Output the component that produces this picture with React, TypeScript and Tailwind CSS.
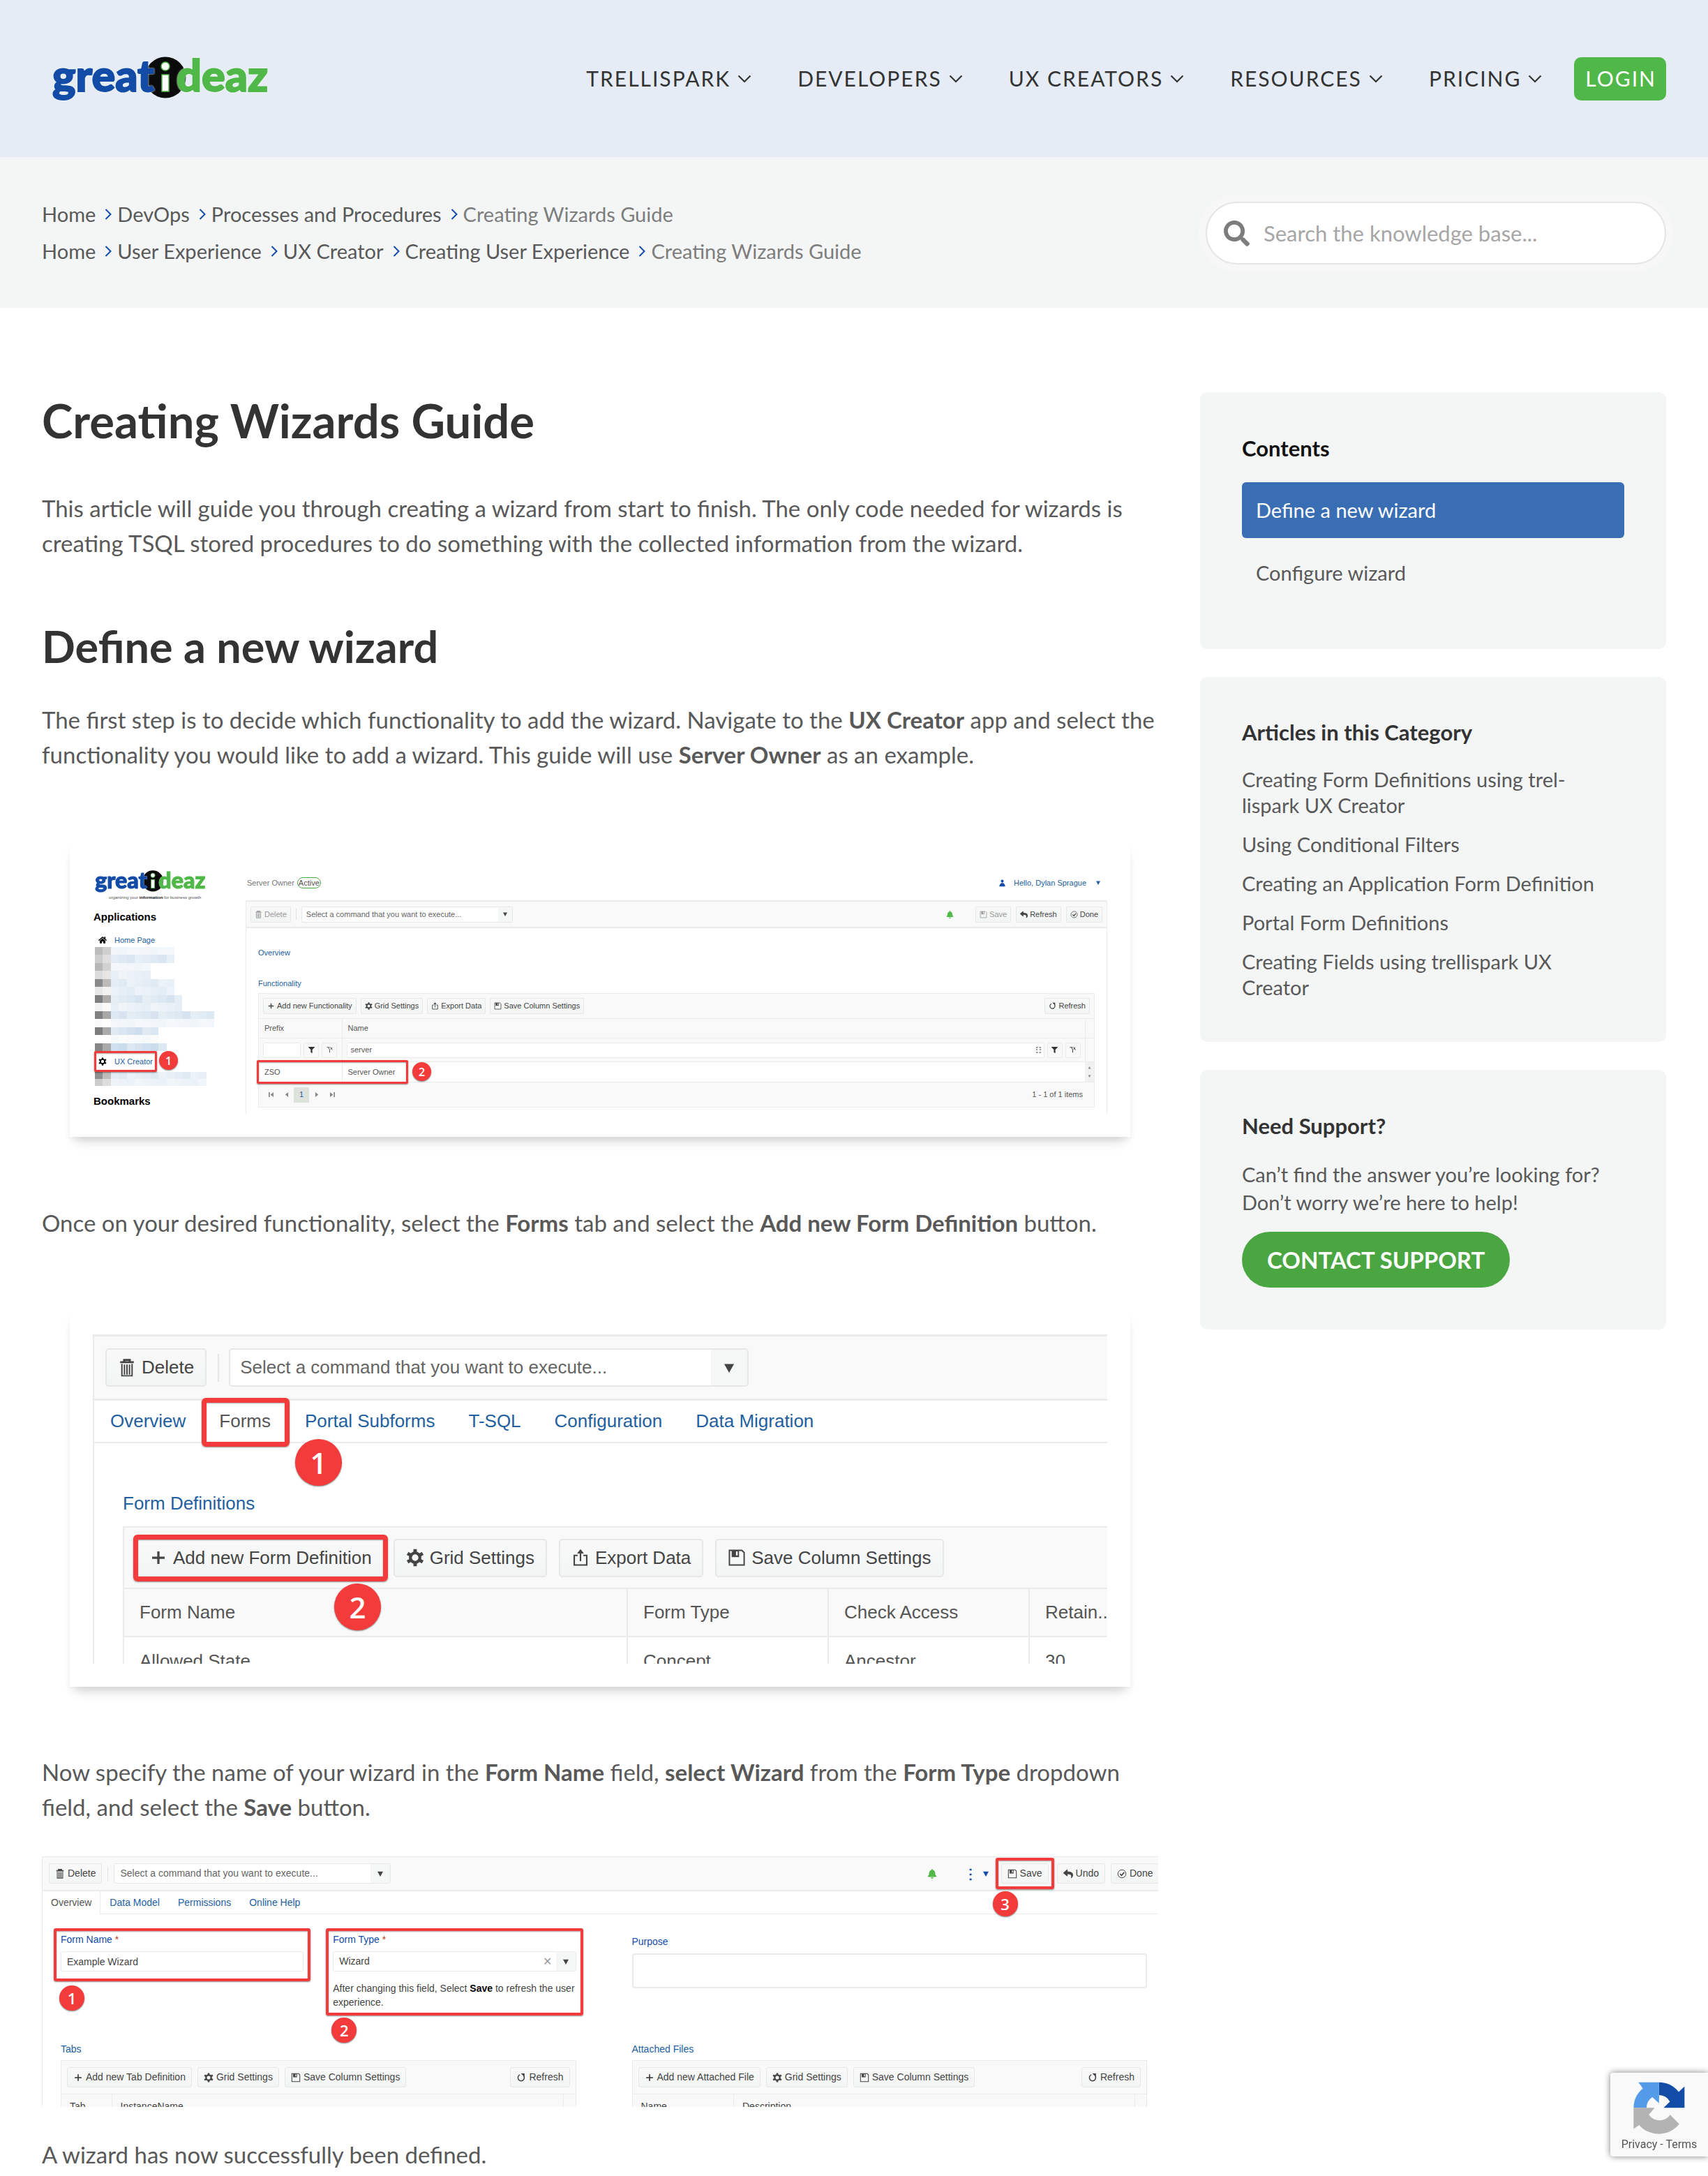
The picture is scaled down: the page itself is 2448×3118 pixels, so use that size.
import React from "react";
import { FaBell, FaFilter, FaHome, FaReply, FaSearch } from "react-icons/fa";

/* ---------- icons ---------- */

const Svg = ({ children, className = "h-[1em] w-[1em]" }: { children: React.ReactNode; className?: string }) => (
  <svg viewBox="0 0 16 16" className={`shrink-0 ${className}`} fill="none" stroke="currentColor" strokeWidth="1" aria-hidden="true">
    {children}
  </svg>
);

const Trash = () => (
  <Svg>
    <path d="M2 3h12M5.500 3V1h5v2" strokeWidth="1.800" />
    <path d="M3.500 4.500V15h9V4.500M5.800 5v9M8 5v9M10.200 5v9" strokeWidth="1.200" />
  </Svg>
);
const Plus = () => (
  <Svg>
    <path d="M8 2.500v11M2.500 8h11" strokeWidth="2" />
  </Svg>
);
const Gear = () => (
  <Svg>
    <circle cx="8" cy="8" r="4.200" strokeWidth="2.600" />
    <path d="M8 .5v3M8 12.500v3M1.300 4.200l2.600 1.500M12.100 10.300l2.600 1.500M1.300 11.800l2.600-1.500M12.100 5.700l2.600-1.500" strokeWidth="3" />
  </Svg>
);
const Export = () => (
  <Svg>
    <path d="M5.500 6H2.500v8.500h11V6h-3M8 11V2.500" strokeWidth="1.300" />
    <path d="M8 .5l3 3.800H5z" fill="currentColor" stroke="none" />
  </Svg>
);
const Floppy = () => (
  <Svg>
    <path d="M1.500 1.500h11l2 2v11h-13z" strokeWidth="1.200" />
    <path d="M3.500 1.500h6.500v6H3.500z" fill="currentColor" stroke="none" />
    <path d="M7.300 2.500h1.500v3.500H7.300z" fill="#fff" stroke="none" />
  </Svg>
);
const Reload = () => (
  <Svg>
    <path d="M6 3.300A5.200 5.200 0 1 0 12 5" strokeWidth="1.800" />
    <path d="M7.500 1h6v6z" fill="currentColor" stroke="none" />
  </Svg>
);
const Check = () => (
  <Svg>
    <circle cx="8" cy="8" r="6.600" strokeWidth="1.100" />
    <path d="M4.800 8l2.600 2.600 4.300-5" strokeWidth="1.900" />
  </Svg>
);
const Person = () => (
  <Svg>
    <circle cx="8" cy="3.800" r="3" fill="currentColor" stroke="none" />
    <path d="M6 7.500h4c2.500 1.500 4 4 4 7.500H2c0-3.500 1.500-6 4-7.500z" fill="currentColor" stroke="none" />
  </Svg>
);
const FilterOff = () => (
  <Svg>
    <path d="M2 2.500h5l-1 2 2 3v6M10 7l3-4.500M9 2l5 6" strokeWidth="1.400" />
  </Svg>
);
const Caret = ({ className = "h-[8px] w-[8px]" }: { className?: string }) => (
  <svg viewBox="0 0 10 10" className={`shrink-0 ${className}`} fill="currentColor" aria-hidden="true">
    <path d="M0 1h10L5 10z" />
  </svg>
);
const Chevron = ({ className }: { className: string }) => (
  <svg viewBox="0 0 20 12" className={className} fill="none" stroke="currentColor" strokeWidth="2.200" aria-hidden="true">
    <path d="M1.500 1.500L10 10l8.500-8.500" />
  </svg>
);
const Pager = ({ d }: { d: string }) => (
  <svg viewBox="0 0 8 8" className="h-[7px] w-[7px]" fill="#888" aria-hidden="true">
    <path d={d} />
  </svg>
);

const Logo = ({ className, tagline = false }: { className: string; tagline?: boolean }) => (
  <svg viewBox={tagline ? "0 0 310 84" : "0 0 310 72"} className={`overflow-visible ${className}`} role="img" aria-label="greatideaz">
    <circle cx="161" cy="34" r="29.500" fill="#0b0b0b" />
    <g
      fontFamily="Lato, sans-serif"
      fontWeight="900"
      fontSize="63"
      strokeWidth="2"
      className="drop-shadow-[0_0_1px_#ffffff]"
    >
      <text x="-1" y="54" fill="#124ca6" stroke="#124ca6">great</text>
      <text x="177" y="54" fill="#50b848" stroke="#50b848">deaz</text>
    </g>
    <circle cx="161" cy="18" r="6" fill="#fff" stroke="#50b848" strokeWidth="1.500" />
    <path d="M156 30h10v24h-10z" fill="#fff" stroke="#50b848" strokeWidth="1.500" />
    {tagline && (
      <text x="38" y="84" fontFamily="Liberation Sans, sans-serif" fontSize="12" fill="#555">
        organizing your <tspan fontWeight="700" fill="#111">information</tspan> for business growth
      </text>
    )}
  </svg>
);

/* ---------- application screenshot parts ---------- */

type Size = "sm" | "md" | "lg";
const buttonSize: Record<Size, string> = {
  sm: "h-[23px] gap-[3px] rounded-[2px] border px-[5px] text-[11px]",
  md: "h-[29px] gap-1 rounded-[3px] border px-2 text-[14px]",
  lg: "h-[55px] gap-2 rounded-[5px] border-2 px-4 text-[26px]",
};
const Btn = ({ size, icon, children, muted = false }: { size: Size; icon: React.ReactNode; children: React.ReactNode; muted?: boolean }) => (
  <button
    type="button"
    className={`flex shrink-0 items-center whitespace-nowrap border-[#e6e7e8] bg-linear-to-b from-[#f9f9f9] to-[#f3f5f5] ${muted ? "text-[#999]" : "text-[#444]"} ${buttonSize[size]}`}
  >
    {icon}
    {children}
  </button>
);

const comboSize: Record<Size, string> = {
  sm: "h-[23px] w-[303px] rounded-[2px] border text-[11px]",
  md: "h-[29px] w-[397px] rounded-[3px] border text-[14px]",
  lg: "h-[55px] w-[745px] rounded-[5px] border-2 text-[26px]",
};
const comboPad: Record<Size, string> = { sm: "px-[6px]", md: "px-2", lg: "px-[14px]" };
const comboArrow: Record<Size, string> = { sm: "w-[20px]", md: "w-[28px]", lg: "w-[52px]" };
const caretSize: Record<Size, string> = { sm: "h-[6px] w-[6px]", md: "h-[8px] w-[8px]", lg: "h-[14px] w-[14px]" };
const Combo = ({ size }: { size: Size }) => (
  <div className={`flex shrink-0 overflow-hidden border-[#e6e7e8] bg-white text-[#656565] ${comboSize[size]}`}>
    <select aria-label="Command" className={`min-w-0 flex-1 appearance-none bg-transparent ${comboPad[size]}`}>
      <option>Select a command that you want to execute...</option>
    </select>
    <span className={`flex items-center justify-center bg-[#f5f6f6] text-[#444] ${comboArrow[size]}`}>
      <Caret className={caretSize[size]} />
    </span>
  </div>
);

const badgeSize: Record<Size, string> = {
  sm: "h-[27px] w-[27px] text-[16px]",
  md: "h-[36px] w-[36px] text-[22px]",
  lg: "h-[67px] w-[67px] text-[42px]",
};
const Badge = ({ size, n, className }: { size: Size; n: number; className: string }) => (
  <span className={`absolute z-10 flex items-center justify-center rounded-full bg-[#f43b3b] font-["Open_Sans",sans-serif] leading-none font-semibold text-white shadow-[0_1px_2px_rgba(0,0,0,0.5)] ${badgeSize[size]} ${className}`}>
    {n}
  </span>
);
const Mark = ({ className }: { className: string }) => (
  <span className={`pointer-events-none absolute border-[#f43b3b] shadow-[0_1px_2px_rgba(0,0,0,0.45),inset_0_1px_2px_rgba(0,0,0,0.35)] ${className}`} />
);

const mosaic: [string, string, number, number][] = [
  ["#bcbcbc", "#cfcfcf", 10, 0.25],
  ["#cccccc", "#dedede", 10, 0.6],
  ["#b8b8b8", "#d2d2d2", 7, 0.25],
  ["#dcdcdc", "#e6e6e6", 7, 0.4],
  ["#8a8a8a", "#bbbbbb", 10, 0.5],
  ["#e8e8e8", "#f2f2f2", 10, 0.45],
  ["#7e7e7e", "#adadad", 11, 0.65],
  ["#f2f2f2", "#fafafa", 11, 0.4],
  ["#808080", "#a8a8a8", 15, 0.65],
  ["#fafafa", "#fdfdfd", 15, 0.25],
  ["#7d7d7d", "#aaaaaa", 8, 0.8],
  ["#ffffff", "#ffffff", 8, 0.15],
  ["#868686", "#aaaaaa", 9, 0.85],
];
const mosaicEnd: [string, string, number, number][] = [
  ["#8e8e8e", "#bdbdbd", 14, 0.5],
  ["#cccccc", "#dddddd", 14, 0.35],
];
const Mosaic = ({ rows, className }: { rows: [string, string, number, number][]; className: string }) => (
  <svg viewBox={`0 0 15 ${rows.length}`} preserveAspectRatio="none" className={className} shapeRendering="crispEdges" aria-hidden="true">
    {rows.map(([a, b, n, o], r) =>
      Array.from({ length: n }, (_, c) => (
        <rect
          key={`${r}-${c}`}
          x={c}
          y={r}
          width="1"
          height="1"
          fill={c === 0 ? a : c === 1 ? b : "#c2d6e8"}
          opacity={c < 2 ? 1 : o * (0.65 + 0.35 * (((c * 5 + r * 3) % 4) / 3))}
        />
      )),
    )}
  </svg>
);

const sans = 'font-["Liberation_Sans",Arial,sans-serif] leading-normal';
const line = "border-[#ebebeb]";

const ServerOwnerShot = () => (
  <div className={`flex h-[356px] overflow-hidden text-[11px] text-[#555] ${sans}`}>
    <div className="flex w-[219px] shrink-0 flex-col pt-[5px] text-[#22609f]">
      <Logo tagline className="ml-[3px] h-[43px] w-[160px]" />
      <h3 className="mt-[17px] ml-px text-[15px] leading-[18px] font-bold text-black">Applications</h3>
      <a href="#home" className="mt-[14px] flex h-[20px] items-center gap-[11px] pl-2">
        <FaHome className="text-[12px] text-black" />
        Home Page
      </a>
      <Mosaic rows={mosaic} className="ml-[3px] h-[149px] w-[171px]" />
      <div className="relative">
        <a href="#ux" className="flex h-[30px] items-center gap-[11px] pl-2">
          <span className="text-[12px] text-black"><Gear /></span>
          UX Creator
        </a>
        <Mark className="inset-y-0 left-[2px] w-[90px] rounded-[2px] border-[3px]" />
        <Badge size="sm" n={1} className="top-0 left-[95px]" />
      </div>
      <Mosaic rows={mosaicEnd} className="ml-[3px] h-[20px] w-[171px]" />
      <h3 className="mt-[13px] ml-px text-[15px] leading-[18px] font-bold text-black">Bookmarks</h3>
    </div>

    <div className="flex min-w-0 flex-1 flex-col">
      <div className="flex h-[50px] shrink-0 items-center gap-1 pr-[10px] pl-[2px]">
        <span className="text-[#777]">Server Owner</span>
        <span className="rounded-full border border-[#50a848] px-[1px] leading-[14px]">Active</span>
        <a href="#user" className="ml-auto flex items-center gap-[11px] text-[#22609f]">
          <span className="text-[#124ca6]"><Person /></span>
          Hello, Dylan Sprague
          <Caret className="ml-[3px] h-[6px] w-[6px]" />
        </a>
      </div>
      <div className={`flex h-[40px] shrink-0 items-center gap-[7px] border-x border-y-2 bg-[#f9f9f9] px-[6px] ${line}`}>
        <Btn size="sm" icon={<Trash />} muted>Delete</Btn>
        <span className="h-4 border-l border-[#e3e3e3]" />
        <Combo size="sm" />
        <FaBell className="mr-[24px] ml-auto text-[11px] text-[#50b848]" />
        <Btn size="sm" icon={<Floppy />} muted>Save</Btn>
        <Btn size="sm" icon={<FaReply />}>Refresh</Btn>
        <Btn size="sm" icon={<Check />}>Done</Btn>
      </div>
      <div className={`flex-1 border-x px-[17px] ${line}`}>
        <h4 className="mt-[28px] leading-[14px] text-[#22609f]">Overview</h4>
        <h4 className="mt-[30px] leading-[14px] text-[#22609f]">Functionality</h4>
        <div className={`relative mt-[7px] border ${line}`}>
          <div className="flex h-[35px] items-center gap-[6px] bg-[#f9f9f9] px-[6px]">
            <Btn size="sm" icon={<Plus />}>Add new Functionality</Btn>
            <Btn size="sm" icon={<Gear />}>Grid Settings</Btn>
            <Btn size="sm" icon={<Export />}>Export Data</Btn>
            <Btn size="sm" icon={<Floppy />}>Save Column Settings</Btn>
            <span className="flex-1" />
            <Btn size="sm" icon={<Reload />}>Refresh</Btn>
          </div>
          <table className="w-full table-fixed border-collapse text-left">
            <thead className="bg-[#f9f9f9]">
              <tr className={`h-[28px] border-y ${line}`}>
                <th scope="col" className={`w-[119px] border-r pl-2 font-normal ${line}`}>Prefix</th>
                <th scope="col" className="pl-2 font-normal">Name</th>
                <td className={`w-[13px] border-l ${line}`} />
              </tr>
              <tr className="h-[34px]">
                <td className={`border-r px-[6px] ${line}`}>
                  <div className="flex gap-1">
                    <input aria-label="Filter prefix" className={`h-[22px] w-[54px] rounded-[2px] border bg-white ${line}`} />
                    <button type="button" aria-label="Filter" className={`flex h-[22px] w-[22px] items-center justify-center rounded-[2px] border text-[9px] text-[#333] ${line}`}><FaFilter /></button>
                    <button type="button" aria-label="Clear filter" className={`flex h-[22px] w-[22px] items-center justify-center rounded-[2px] border ${line}`}><FilterOff /></button>
                  </div>
                </td>
                <td className="px-[6px]">
                  <div className="flex gap-1">
                    <div className={`flex h-[22px] flex-1 items-center rounded-[2px] border bg-white px-1 ${line}`}>
                      <input aria-label="Filter name" defaultValue="server" className="min-w-0 flex-1 bg-transparent px-px" />
                      <span className="h-[9px] w-[7px] border-2 border-y border-dotted border-[#999]" />
                    </div>
                    <button type="button" aria-label="Filter" className={`flex h-[22px] w-[22px] items-center justify-center rounded-[2px] border text-[9px] text-[#333] ${line}`}><FaFilter /></button>
                    <button type="button" aria-label="Clear filter" className={`flex h-[22px] w-[22px] items-center justify-center rounded-[2px] border text-[#333] ${line}`}><FilterOff /></button>
                  </div>
                </td>
                <td className={`border-l ${line}`} />
              </tr>
            </thead>
            <tbody>
              <tr className={`h-[29px] border-y bg-white ${line}`}>
                <td className={`border-r pl-2 ${line}`}>ZSO</td>
                <td className="pl-2">Server Owner</td>
                <td className="bg-[#f1f1f1]">
                  <div className="flex flex-col items-center gap-2 text-[#888]">
                    <Caret className="h-[4px] w-[5px] rotate-180" />
                    <Caret className="h-[4px] w-[5px]" />
                  </div>
                </td>
              </tr>
            </tbody>
          </table>
          <Mark className="top-[95px] -left-[3px] h-[34px] w-[217px] rounded-[2px] border-[3px]" />
          <Badge size="sm" n={2} className="top-[98px] left-[220px]" />
          <div className="flex h-[35px] items-center bg-[#f9f9f9] pr-4 pl-[6px]">
            <span className="flex w-[22px] justify-center"><Pager d="M0 0h2v8H0zM8 0v8L3 4z" /></span>
            <span className="flex w-[22px] justify-center"><Pager d="M7 0v8L2 4z" /></span>
            <span className="flex h-[22px] w-[22px] items-center justify-center bg-[#dde2dd] text-[#22609f]">1</span>
            <span className="flex w-[22px] justify-center"><Pager d="M1 0v8l5-4z" /></span>
            <span className="flex w-[22px] justify-center"><Pager d="M6 0h2v8H6zM0 0v8l5-4z" /></span>
            <span className="ml-auto">1 - 1 of 1 items</span>
          </div>
        </div>
      </div>
    </div>
  </div>
);

const FormsShot = () => (
  <div className={`h-[472px] overflow-hidden border-l-2 text-[26px] text-[#555] ${line} ${sans}`}>
    <div className={`flex h-[95px] items-center gap-4 border-y-[3px] bg-[#f9f9f9] px-4 ${line}`}>
      <Btn size="lg" icon={<Trash />}>Delete</Btn>
      <span className="-mr-[2px] h-10 border-l-2 border-[#e6e6e6]" />
      <Combo size="lg" />
    </div>
    <div className={`relative flex h-[61px] items-center border-b-2 text-[#22609f] ${line}`}>
      <a href="#overview" className="px-[23px]">Overview</a>
      <div className="relative">
        <a href="#forms" className="px-[25px] text-[#555]">Forms</a>
        <Mark className="-right-[2px] -top-[14px] -bottom-[17px] left-0 rounded-[6px] border-[7px]" />
      </div>
      <a href="#portal" className="px-[24px]">Portal Subforms</a>
      <a href="#tsql" className="px-[24px]">T-SQL</a>
      <a href="#config" className="px-[24px]">Configuration</a>
      <a href="#migration" className="px-[24px]">Data Migration</a>
      <Badge size="lg" n={1} className="top-[55px] left-[288px]" />
    </div>
    <h4 className="mt-[70px] ml-[41px] leading-[32px] text-[#22609f]">Form Definitions</h4>
    <div className={`relative mt-[17px] ml-[41px] border-t-2 border-l-2 ${line}`}>
      <div className="flex h-[86px] items-center gap-[17px] bg-[#f9f9f9] pl-[18px]">
        <div className="relative -mr-1">
          <Btn size="lg" icon={<Plus />}>Add new Form Definition</Btn>
          <Mark className="-inset-x-[5px] -inset-y-[6px] rounded-[6px] border-[7px]" />
        </div>
        <Btn size="lg" icon={<Gear />}>Grid Settings</Btn>
        <Btn size="lg" icon={<Export />}>Export Data</Btn>
        <Btn size="lg" icon={<Floppy />}>Save Column Settings</Btn>
      </div>
      <table className="w-full table-fixed border-collapse text-left">
        <thead>
          <tr className={`h-[69px] border-y-2 bg-[#f9f9f9] ${line}`}>
            <th scope="col" className="w-[721px] pl-[22px] font-normal">Form Name</th>
            <th scope="col" className={`w-[288px] border-l-2 pl-[22px] font-normal ${line}`}>Form Type</th>
            <th scope="col" className={`w-[288px] border-l-2 pl-[22px] font-normal ${line}`}>Check Access</th>
            <th scope="col" className={`overflow-hidden border-l-2 pl-[22px] font-normal whitespace-nowrap ${line}`}>Retain...</th>
          </tr>
        </thead>
        <tbody>
          <tr className="h-[70px]">
            <td className="pl-[22px]">Allowed State</td>
            <td className={`border-l-2 pl-[22px] ${line}`}>Concept</td>
            <td className={`border-l-2 pl-[22px] ${line}`}>Ancestor</td>
            <td className={`border-l-2 pl-[22px] ${line}`}>30</td>
          </tr>
        </tbody>
      </table>
      <Badge size="lg" n={2} className="top-[80px] left-[301px]" />
    </div>
  </div>
);

const GridPanel = ({ title, add, cols }: { title: string; add: string; cols: [string, string] }) => (
  <div className="min-w-0 flex-1">
    <h4 className="leading-4 text-[#22609f]">{title}</h4>
    <div className={`mt-2 border ${line}`}>
      <div className="flex h-[47px] items-center gap-2 bg-[#f9f9f9] px-2">
        <Btn size="md" icon={<Plus />}>{add}</Btn>
        <Btn size="md" icon={<Gear />}>Grid Settings</Btn>
        <Btn size="md" icon={<Floppy />}>Save Column Settings</Btn>
        <span className="flex-1" />
        <Btn size="md" icon={<Reload />}>Refresh</Btn>
      </div>
      <table className="w-full border-collapse text-left">
        <thead>
          <tr className={`h-[36px] border-t bg-[#f9f9f9] ${line}`}>
            <th scope="col" className={`pl-3 font-normal ${cols[0] === "Tab" ? "w-[72px]" : "w-[145px]"}`}>{cols[0]}</th>
            <th scope="col" className={`border-l pl-3 font-normal ${line}`}>{cols[1]}</th>
            <td className={`w-[17px] border-l ${line}`} />
          </tr>
        </thead>
      </table>
    </div>
  </div>
);

const WizardShot = () => (
  <div className={`h-[359px] overflow-hidden border-l text-[14px] text-[#444] ${line} ${sans}`}>
    <div className={`relative flex h-[50px] items-center gap-2 border-t border-b-2 bg-[#f9f9f9] pl-[9px] ${line}`}>
      <Btn size="md" icon={<Trash />}>Delete</Btn>
      <span className="h-5 border-l border-[#e3e3e3]" />
      <Combo size="md" />
      <FaBell className="mr-[30px] ml-auto text-[14px] text-[#50b848]" />
      <span className="text-[20px] leading-none font-bold text-[#124ca6]">⋮</span>
      <Caret className="mr-[10px] h-[8px] w-[8px] text-[#124ca6]" />
      <div className="relative mr-1">
        <Btn size="md" icon={<Floppy />}>Save</Btn>
        <Mark className="-inset-[8px] rounded-[3px] border-4" />
        <Badge size="md" n={3} className="top-[40px] -left-3" />
      </div>
      <Btn size="md" icon={<FaReply />}>Undo</Btn>
      <div className="w-[68px] overflow-hidden"><Btn size="md" icon={<Check />}>Done</Btn></div>
    </div>
    <div className={`flex h-[33px] items-stretch border-b leading-[33px] text-[#22609f] ${line}`}>
      <a href="#o" className={`-mb-px border-r bg-white px-3 text-[#555] ${line}`}>Overview</a>
      <a href="#d" className="px-[13px]">Data Model</a>
      <a href="#p" className="px-[13px]">Permissions</a>
      <a href="#h" className="px-[13px]">Online Help</a>
    </div>
    <div className="flex gap-[80px] pr-4 pl-[26px]">
      <div className="flex flex-1 gap-[42px]">
        <div className="relative h-fit flex-1 pt-[26px] pb-[14px]">
          <label htmlFor="fname" className="block leading-5 text-[#124ca6]">Form Name <span className="text-[#c0392b]">*</span></label>
          <input id="fname" defaultValue="Example Wizard" className={`mt-[7px] block h-[29px] w-full rounded-[3px] border px-2 ${line}`} />
          <Mark className="top-[20px] -right-[10px] bottom-0 -left-[10px] rounded-[3px] border-4" />
          <Badge size="md" n={1} className="top-[102px] -left-[2px]" />
        </div>
        <div className="relative h-fit flex-1 pt-[26px] pb-[9px]">
          <label htmlFor="ftype" className="block leading-5 text-[#124ca6]">Form Type <span className="text-[#c0392b]">*</span></label>
          <div className={`mt-[7px] flex h-[29px] items-center rounded-[3px] border ${line}`}>
            <select id="ftype" className="min-w-0 flex-1 appearance-none px-2"><option>Wizard</option></select>
            <span className="px-[6px] text-[16px] text-[#999]">✕</span>
            <span className="flex h-full w-[28px] items-center justify-center bg-[#f5f6f6]"><Caret /></span>
          </div>
          <p className="mt-[14px] leading-5 whitespace-nowrap">
            After changing this field, Select <b className="text-black">Save</b> to refresh the user<br />experience.
          </p>
          <Mark className="top-[20px] -right-[10px] bottom-0 -left-[10px] rounded-[3px] border-4" />
          <Badge size="md" n={2} className="top-[148px] -left-[2px]" />
        </div>
      </div>
      <div className="flex-1 pt-[29px]">
        <label htmlFor="purpose" className="block leading-5 text-[#124ca6]">Purpose</label>
        <textarea id="purpose" className={`mt-[7px] block h-[50px] w-full resize-none rounded-[4px] border-2 ${line}`} />
      </div>
    </div>
    <div className="mt-10 flex gap-[80px] pr-4 pl-[26px]">
      <GridPanel title="Tabs" add="Add new Tab Definition" cols={["Tab", "InstanceName"]} />
      <GridPanel title="Attached Files" add="Add new Attached File" cols={["Name", "Description"]} />
    </div>
  </div>
);

/* ---------- page ---------- */

const Crumbs = ({ items }: { items: string[] }) => (
  <ol className="flex h-[53px] items-center text-[29px] text-[#595959]">
    {items.map((t, i) => (
      <li key={t} className="flex items-center">
        {i > 0 && (
          <svg viewBox="0 0 10 16" className="mr-2 ml-[13px] h-4 w-[10px]" fill="none" stroke="#124ca6" strokeWidth="2" aria-hidden="true">
            <path d="M1.500 1L8.500 8l-7 7" />
          </svg>
        )}
        {i < items.length - 1 ? <a href="#crumb">{t}</a> : <span className="text-[#7d7d7d]">{t}</span>}
      </li>
    ))}
  </ol>
);

const articles: React.ReactNode[] = [
  <>Creating Form Definitions using trel-<br />lispark UX Creator</>,
  "Using Conditional Filters",
  "Creating an Application Form Definition",
  "Portal Form Definitions",
  <>Creating Fields using trellispark UX<br />Creator</>,
];

const shadow = "shadow-[0_14px_16px_-8px_rgba(0,0,0,0.14),0_6px_10px_-2px_rgba(0,0,0,0.07)]";

export default function App() {
  return (
    <div className='bg-white font-["Lato",sans-serif] text-[#595959]'>
      <header className="flex h-[225px] items-center justify-between bg-[#e5ecf5] px-[60px]">
        <a href="#top" className="ml-4">
          <Logo className="h-[72px] w-[310px]" />
        </a>
        <nav className="flex items-center gap-[66px] text-[30px] tracking-[2px] text-[#333]">
          {["TRELLISPARK", "DEVELOPERS", "UX CREATORS", "RESOURCES", "PRICING"].map((t) => (
            <button key={t} type="button" className="flex items-center gap-[10px] tracking-[2px]">
              {t}
              <Chevron className="h-[12px] w-[20px]" />
            </button>
          ))}
          <a href="#login" className="-ml-5 flex h-[62px] items-center rounded-[10px] bg-[#50b848] pr-[14px] pl-4 text-white">LOGIN</a>
        </nav>
      </header>

      <div className="flex h-[216px] items-center justify-between bg-[#f4f6f6] px-[60px]">
        <nav aria-label="Breadcrumb">
          <Crumbs items={["Home", "DevOps", "Processes and Procedures", "Creating Wizards Guide"]} />
          <Crumbs items={["Home", "User Experience", "UX Creator", "Creating User Experience", "Creating Wizards Guide"]} />
        </nav>
        <label className="mt-[2px] flex h-[90px] w-[660px] items-center gap-5 rounded-full border-2 border-[#e5e5e5] bg-white px-6 shadow-[0_0_0_10px_#f7f7f7]">
          <FaSearch className="text-[37px] text-[#7d7d7d]" />
          <input type="search" aria-label="Search" placeholder="Search the knowledge base..." className="min-w-0 flex-1 bg-transparent text-[31px] outline-none placeholder:text-[#a6a6a6]" />
        </label>
      </div>

      <div className="flex items-start gap-[60px] px-[60px] pt-[121px] pb-2">
        <main className="min-w-0 flex-1 text-[33px] leading-[50px]">
          <h1 className="text-[67px] leading-[80px] font-bold text-[#333]">Creating Wizards Guide</h1>
          <p className="mt-[61px]">
            This article will guide you through creating a wizard from start to finish. The only code needed for wizards is
            creating TSQL stored procedures to do something with the collected information from the wizard.
          </p>
          <h2 className="mt-[87px] text-[63px] leading-[72px] font-bold text-[#333]">Define a new wizard</h2>
          <p className="mt-[44px]">
            The first step is to decide which functionality to add the wizard. Navigate to the <b>UX Creator</b> app and select the
            functionality you would like to add a wizard. This guide will use <b>Server Owner</b> as an example.
          </p>
          <figure className={`mx-10 mt-[101px] p-[33px] ${shadow}`}>
            <ServerOwnerShot />
          </figure>
          <p className="mt-[98px]">
            Once on your desired functionality, select the <b>Forms</b> tab and select the <b>Add new Form Definition</b> button.
          </p>
          <figure className={`mx-10 mt-[102px] p-[33px] ${shadow}`}>
            <FormsShot />
          </figure>
          <p className="mt-[97px]">
            Now specify the name of your wizard in the <b>Form Name</b> field, <b>select Wizard</b> from the <b>Form Type</b> dropdown
            field, and select the <b>Save</b> button.
          </p>
          <figure className="mt-[46px]">
            <WizardShot />
          </figure>
          <p className="mt-[43px]">A wizard has now successfully been defined.</p>
        </main>

        <aside className="flex w-[668px] shrink-0 flex-col gap-10 text-[29px] leading-[37px]">
          <section className="rounded-[10px] bg-[#f4f6f6] px-[60px] pt-[60px] pb-[69px]">
            <h2 className="text-[31px] leading-[40px] font-bold text-[#111]">Contents</h2>
            <ul className="mt-[29px] flex flex-col gap-[10px]">
              <li><a href="#define" className="flex h-20 items-center rounded-[6px] bg-[#3a6eb4] px-5 pb-[2px] text-white">Define a new wizard</a></li>
              <li><a href="#configure" className="flex h-20 items-center rounded-[6px] px-5 pb-[2px]">Configure wizard</a></li>
            </ul>
          </section>
          <section className="rounded-[10px] bg-[#f4f6f6] p-[60px]">
            <h2 className="text-[31px] leading-[38px] font-bold text-[#333]">Articles in this Category</h2>
            <ul className="mt-[30px] flex flex-col gap-[19px]">
              {articles.map((a, i) => (
                <li key={i}><a href="#article" className="block">{a}</a></li>
              ))}
            </ul>
          </section>
          <section className="rounded-[10px] bg-[#f4f6f6] p-[60px]">
            <h2 className="text-[31px] leading-[40px] font-bold text-[#333]">Need Support?</h2>
            <p className="mt-[30px] leading-[40px]">Can’t find the answer you’re looking for?<br />Don’t worry we’re here to help!</p>
            <button type="button" className="mt-[22px] flex h-20 items-center rounded-full bg-[#4aa641] px-9 text-[33px] font-bold text-white">CONTACT SUPPORT</button>
          </section>
        </aside>
      </div>

      <div className="fixed right-0 bottom-7 flex h-[120px] w-[140px] flex-col items-center rounded-l-[4px] bg-[#f9f9f9] pt-[13px] shadow-[0_0_10px_#808080]">
        <svg viewBox="183 128 223 228" className="h-[76px] w-[74px]" aria-hidden="true">
          <path d="M294 130A112 112 0 0 1 379 171L404 148V240H314L341 213A56 56 0 0 0 294 185Z" fill="#124ca6" />
          <path d="M184 240A112 112 0 0 1 224 156L205 130H294V220L265 194A56 56 0 0 0 240 240Z" fill="#539be8" />
          <path d="M184 240H275L250 270A56 56 0 0 0 342 270L381 310A112 112 0 0 1 208 314L184 331Z" fill="#b3b3b3" />
        </svg>
        <span className="mt-1 font-[Roboto,sans-serif] text-[16px] leading-5 text-[#555]"><a href="#privacy">Privacy</a> - <a href="#terms">Terms</a></span>
      </div>
    </div>
  );
}
